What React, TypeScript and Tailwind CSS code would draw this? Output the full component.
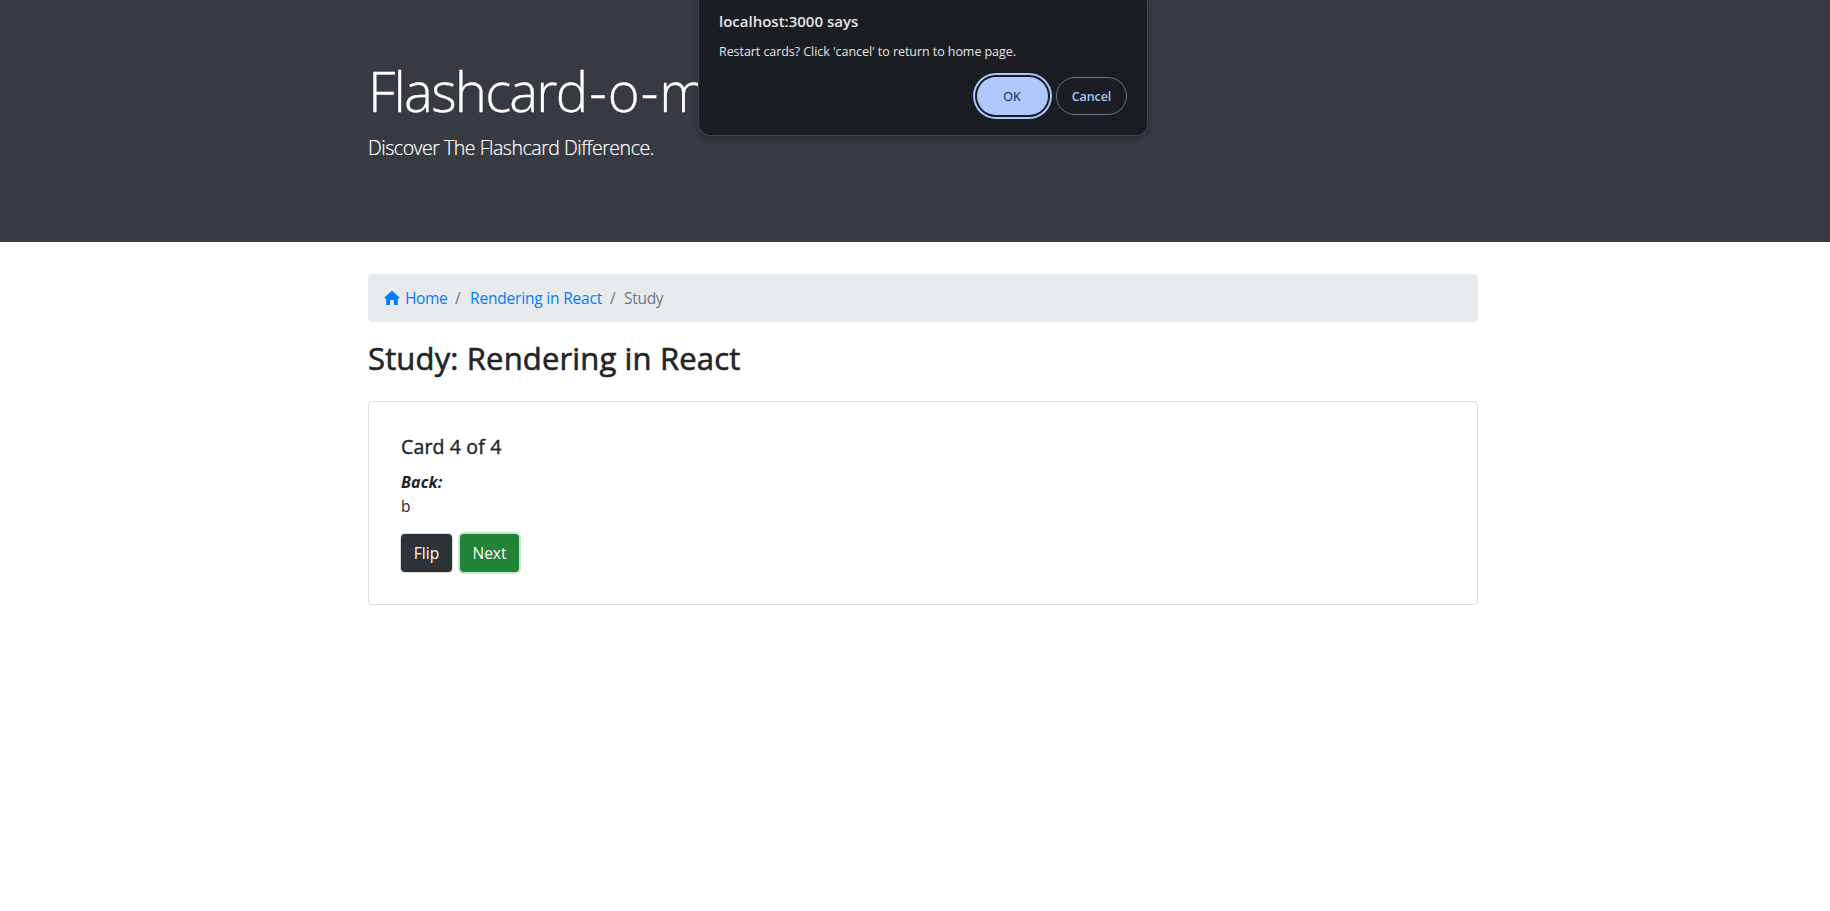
import React from "react";

function Header() {
  return (
    <header className="h-[242px] bg-[#363a42] pl-[368px] pt-[58px] text-white">
      <h1 className="mb-2 h-[67px] whitespace-nowrap text-[54.5px] font-light leading-[67px] tracking-[-1.8px] [-webkit-text-stroke:0.3px_white]">
        Flashcar<span className="tracking-[1px]">d-o-</span>matic
      </h1>
      <p className="whitespace-nowrap text-[19.5px] font-light leading-[30px] tracking-[-0.47px] [-webkit-text-stroke:0.2px_white]">
        Discover The Flashcard Difference.
      </p>
    </header>
  );
}

function HomeIcon() {
  return (
    <svg width="16" height="16" viewBox="0 0 16 16" fill="currentColor" className="mr-[5px] shrink-0">
      <path d="M8 0.8 L15.6 7.6 L14.8 8.5 H13.8 V15 H9.9 V10 H6.1 V15 H2.2 V8.5 H1.2 L0.4 7.6 Z" />
    </svg>
  );
}

function Breadcrumb() {
  return (
    <nav className="flex h-12 items-center rounded bg-[#e8ebee] px-4 text-[15.5px] leading-6 tracking-[-0.15px]">
      <a className="flex w-[63px] items-center tracking-[-0.35px] text-[#007bff]">
        <HomeIcon />
        Home
      </a>
      <span className="w-[23px] pl-2 text-[#6c757d]">/</span>
      <a className="w-[132px] whitespace-nowrap tracking-[-0.19px] text-[#007bff]">Rendering in React</a>
      <span className="w-[22px] pl-2 text-[#6c757d]">/</span>
      <span className="tracking-[-0.3px] text-[#6c757d]">Study</span>
    </nav>
  );
}

function StudyCard() {
  return (
    <section className="mt-[25px] h-[204px] rounded border border-[#dfdfdf] px-8 pt-[33px]">
      <h5 className="mb-[11px] text-[19.5px] leading-6 tracking-[0.15px] [-webkit-text-stroke:0.4px_#212529]">
        Card 4 of 4
      </h5>
      <h6 className="text-[16px] font-bold italic leading-6 tracking-[0.1px]">Back:</h6>
      <p className="text-[15.5px] leading-6">b</p>
      <div className="mt-4 flex gap-2 text-[15.5px] leading-6 text-white">
        <button className="h-[38px] w-[51px] rounded bg-[#2d3236] shadow-[0_0_0_1px_#d9dbdd]">Flip</button>
        <button className="h-[38px] w-[59px] rounded bg-[#208337] shadow-[0_0_0_2px_#c6e6cd]">Next</button>
      </div>
    </section>
  );
}

function ConfirmDialog() {
  return (
    <div
      role="dialog"
      className="absolute left-[698px] top-0 h-[136px] w-[450px] rounded-b-xl border border-t-0 border-[#40444a] bg-[#1a1d21] px-5 pt-[9px] text-[#e3e5ea] shadow-[0_2px_6px_rgba(0,0,0,0.3)]"
    >
      <h2 className="whitespace-nowrap text-[15px] font-semibold leading-6">localhost:3000 says</h2>
      <p className="mt-[9px] whitespace-nowrap text-[12.5px] leading-5 tracking-[-0.06px]">
        Restart cards? Click 'cancel' to return to home page.
      </p>
      <div className="mt-[15px] flex justify-end gap-2 text-[12.5px]">
        <button className="h-[38px] w-[71px] rounded-full bg-[#afc9fc] pr-px pt-[3px] text-[#0f3769] shadow-[0_0_0_2px_#1a1d21,0_0_0_4px_#a8c7fa] [-webkit-text-stroke:0.15px_#0f3769]">
          OK
        </button>
        <button className="h-[38px] w-[71px] rounded-full border border-[#6b7080] pt-[3px] font-semibold tracking-[-0.1px] text-[#a8c7fa]">
          Cancel
        </button>
      </div>
    </div>
  );
}

export default function App() {
  return (
    <div className="relative h-[911px] w-full overflow-hidden bg-white font-['Open_Sans','Noto_Sans',sans-serif] text-[#212529]">
      <Header />
      <main className="ml-[368px] mt-8 w-[1110px]">
        <Breadcrumb />
        <h2 className="mt-[17px] h-[37px] whitespace-nowrap text-[31px] leading-[38px] tracking-[0.15px] [-webkit-text-stroke:0.6px_#212529]">
          Study: Rendering in React
        </h2>
        <StudyCard />
      </main>
      <ConfirmDialog />
    </div>
  );
}
